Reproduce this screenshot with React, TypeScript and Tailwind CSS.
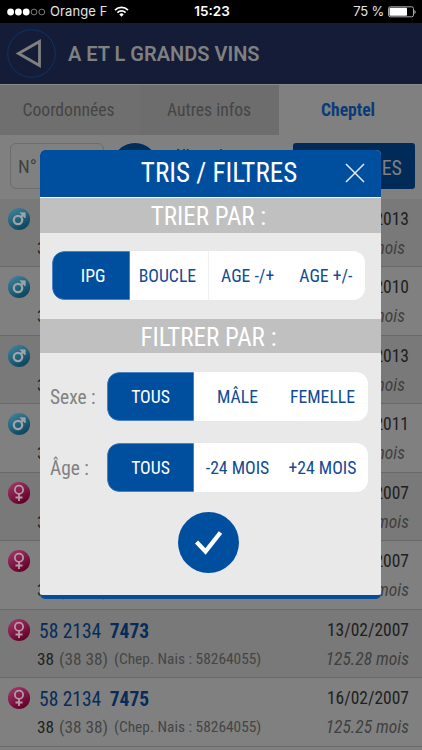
import { clsx } from 'clsx';

type Sex = 'male' | 'female';

interface Animal {
    sex: Sex;
    country: string;
    num: string;
    work: string;
    date: string;
    age: string;
}

const animals: Animal[] = [
    { sex: 'male', country: '58 2134', num: '7467', work: '38', date: '13/02/2013', age: '53.25 mois' },
    { sex: 'male', country: '58 2134', num: '7468', work: '38', date: '16/02/2010', age: '89.25 mois' },
    { sex: 'male', country: '58 2134', num: '7469', work: '38', date: '13/02/2013', age: '53.25 mois' },
    { sex: 'male', country: '58 2134', num: '7470', work: '38', date: '16/02/2011', age: '77.25 mois' },
    { sex: 'female', country: '58 2134', num: '7471', work: '38', date: '13/02/2007', age: '125.28 mois' },
    { sex: 'female', country: '58 2134', num: '7472', work: '38', date: '13/02/2007', age: '125.28 mois' },
    { sex: 'female', country: '58 2134', num: '7473', work: '38', date: '13/02/2007', age: '125.28 mois' },
    { sex: 'female', country: '58 2134', num: '7475', work: '38', date: '16/02/2007', age: '125.25 mois' },
];

function StatusBar() {
    return (
        <div className="relative flex h-[23px] items-center justify-between bg-black pl-[7px] pr-[6px] font-[Inter,sans-serif] text-[13px] text-[#e4e4e4]">
            <div className="flex items-center">
                <svg width="39" height="8" viewBox="0 0 39 8">
                    <circle cx="3.6" cy="4" r="3.4" fill="#fff" />
                    <circle cx="11.4" cy="4" r="3.4" fill="#fff" />
                    <circle cx="19.2" cy="4" r="3.4" fill="#fff" />
                    <circle cx="27" cy="4" r="2.9" fill="none" stroke="#999" strokeWidth="0.8" />
                    <circle cx="34.8" cy="4" r="2.9" fill="none" stroke="#999" strokeWidth="0.8" />
                </svg>
                <span className="ml-[4px] mt-px tracking-[0.1px]">Orange F</span>
                <svg className="ml-[6px]" width="15" height="11" viewBox="0 0 15 11" fill="none" stroke="#fff" strokeWidth="1.7">
                    <path d="M1 4.1a9.2 9.2 0 0 1 13 0" />
                    <path d="M3.4 6.6a5.8 5.8 0 0 1 8.2 0" />
                    <path d="M7.5 10.7 5.3 8.4a3.1 3.1 0 0 1 4.4 0z" fill="#fff" stroke="none" />
                </svg>
            </div>
            <span className="absolute left-[2px] right-0 text-center text-[13.5px] font-semibold text-white">15:23</span>
            <div className="flex items-center">
                <span className="mt-px tracking-[-0.2px]">75 %</span>
                <svg className="ml-[4px]" width="28" height="12" viewBox="0 0 28 12">
                    <rect x="0.5" y="0.8" width="25" height="10" rx="1.8" fill="none" stroke="#aaa" />
                    <rect x="1.5" y="1.8" width="17.5" height="8" rx="0.8" fill="#fff" />
                    <path d="M26.5 4v4c1.4-.4 1.4-3.6 0-4z" fill="#ccc" />
                </svg>
            </div>
        </div>
    );
}

function SexIcon({ sex }: { sex: Sex }) {
    const male = sex === 'male';
    return (
        <svg width="24" height="24" viewBox="0 0 24 24">
            <defs>
                <linearGradient id={sex} x1="0" y1="0" x2="0.6" y2="1">
                    <stop offset="0" stopColor={male ? '#4788a1' : '#a63d70'} />
                    <stop offset="1" stopColor={male ? '#0c465f' : '#640029'} />
                </linearGradient>
            </defs>
            <circle cx="12" cy="12" r="11.1" fill={`url(#${sex})`} />
            {male ? (
                <g fill="none" stroke="#9aa5aa" strokeWidth="2.3">
                    <circle cx="11" cy="13" r="4.2" />
                    <path d="m14 10 2.5-2.5" />
                    <path d="M13 5.8h5.2v5.2z" fill="#9aa5aa" strokeWidth="0.8" />
                </g>
            ) : (
                <g fill="none" stroke="#b79aa5" strokeWidth="1.8">
                    <circle cx="12" cy="8.8" r="4.1" />
                    <path d="M12 13v7M8.5 16.5h7" />
                </g>
            )}
        </svg>
    );
}

function Row({ animal, odd }: { animal: Animal; odd: boolean }) {
    return (
        <div className={clsx('flex h-[68.5px] shrink-0 border-b border-[#696969] pl-[7px] pr-[13px]', odd ? 'bg-[#808080]' : 'bg-[#797979]')}>
            <div className="w-[24px] shrink-0 pt-[8px]">
                <SexIcon sex={animal.sex} />
            </div>
            <div className="flex-1 whitespace-nowrap">
                <div className="mt-[10px] pl-[8px] text-[19.5px] leading-[24px] text-[#072c59]">
                    {animal.country} <b className="ml-[4px] font-bold">{animal.num}</b>
                </div>
                <div className="mt-[4px] flex items-center pl-[6px] text-[17.3px] leading-[22px] text-[#454545]">
                    <span className="text-[#222]">{animal.work}</span>
                    <span className="ml-[5px]">(38 38)</span>
                    <span className="ml-[6px] text-[15.4px]">(Chep. Nais : 58264055)</span>
                </div>
            </div>
            <div className="text-right text-[17.5px]">
                <div className="mt-[9px] leading-[22px] text-[#202020]">{animal.date}</div>
                <div className={clsx('mt-[7px] italic leading-[22px] text-[#404040]', animal.sex === 'male' && 'pr-[4px]')}>{animal.age}</div>
            </div>
        </div>
    );
}

function Segments({ items, className }: { items: string[]; className?: string }) {
    return (
        <div className={clsx('grid h-[49px] auto-cols-fr grid-flow-col overflow-hidden rounded-[12px] bg-white text-[17.7px] text-[#124c93]', className)}>
            {items.map((item, i) => (
                <button
                    key={item}
                    className={clsx(
                        'flex items-center justify-center whitespace-nowrap pt-[2px]',
                        i === 0 && 'rounded-l-[12px] border border-[#4d83bd] bg-[#004f9f] text-white',
                        i === 0 && items.length === 4 && 'pl-[4px]',
                        i === 1 && items.length === 4 && 'border-r border-[#f0f0f0] pr-[3px]',
                        i === 2 && items.length === 3 && 'pr-[4px]'
                    )}
                >
                    {item}
                </button>
            ))}
        </div>
    );
}

function FilterModal() {
    return (
        <div className="absolute left-[40px] top-[150px] h-[449px] w-[341px] overflow-hidden rounded-[5px] border-b-4 border-[#074c98] bg-[#e9e9e9]">
            <div className="relative flex h-[48px] items-center justify-center border-b border-white bg-[#004f9f] text-[27px] text-white">
                <span className="pl-[17px]">TRIS / FILTRES</span>
                <svg className="absolute right-[16px] top-[13px]" width="20" height="20" viewBox="0 0 20 20" stroke="#e5eef8" strokeWidth="1.5">
                    <path d="m1 1 18 18M19 1 1 19" />
                </svg>
            </div>
            <div className="flex h-[35px] items-center justify-center bg-[#c0c0c0] pr-[4px] pt-[3px] text-[25px] text-white">TRIER PAR :</div>
            <div className="px-[12px] pb-[19px] pt-[18px]">
                <Segments items={['IPG', 'BOUCLE', 'AGE -/+', 'AGE +/-']} className="w-[313px]" />
            </div>
            <div className="flex h-[34px] items-center justify-center bg-[#c0c0c0] pr-[4px] pt-[3px] text-[25px] text-white">FILTRER PAR :</div>
            <div className="flex items-center pl-[10px] pt-[19px] text-[19.4px] text-[#828282]">
                <span className="w-[57px] pt-[2px]">Sexe :</span>
                <Segments items={['TOUS', 'MÂLE', 'FEMELLE']} className="w-[261px]" />
            </div>
            <div className="flex items-center pl-[10px] pt-[22px] text-[19.4px] text-[#828282]">
                <span className="w-[57px] pt-[2px]">Âge :</span>
                <Segments items={['TOUS', '-24 MOIS', '+24 MOIS']} className="w-[261px]" />
            </div>
            <button className="ml-[138px] mt-[20px] flex h-[61px] w-[61px] items-center justify-center rounded-full bg-[#004f9f]">
                <svg width="28" height="26" viewBox="0 0 28 26" fill="none" stroke="#fff" strokeWidth="4.4">
                    <path d="M1.5 12 10.5 21.5 25.5 2.5" />
                </svg>
            </button>
        </div>
    );
}

export default function App() {
    return (
        <div className="relative flex h-[750px] w-[422px] flex-col overflow-hidden bg-[#808080] font-[Roboto,sans-serif] font-stretch-condensed">
            <StatusBar />
            <header className="flex h-[61px] shrink-0 items-center bg-[#141c38] pl-[7px]">
                <svg width="49" height="49" viewBox="0 0 49 49" fill="none">
                    <circle cx="24.5" cy="24.5" r="23.8" stroke="#0c3568" />
                    <path d="M11.5 24.5 32.5 12.5v24z" stroke="#808080" strokeWidth="2.8" />
                </svg>
                <h1 className="ml-[12px] text-[20px] font-semibold text-[#808080] font-stretch-[94%]">A ET L GRANDS VINS</h1>
            </header>
            <nav className="flex h-[51px] shrink-0 border-t border-[#8a8a8a] text-[17.6px] text-[#454545]">
                <div className="flex w-[140px] items-center justify-center bg-[#6f6f6f] pr-[3px]">Coordonnées</div>
                <div className="flex w-[139px] items-center justify-center bg-[#6d6d6d] pr-px">Autres infos</div>
                <div className="flex flex-1 items-center justify-center bg-[#808080] pr-[5px] font-bold text-[#0a3b77]">Cheptel</div>
            </nav>
            <div className="flex h-[63.5px] shrink-0 items-start px-[10px] pr-[7px] pt-[8px]">
                <div className="flex h-[46px] w-[94px] items-center rounded-[6px] border border-[#6c6c6c] pl-[7px] pt-[2px] text-[19px] text-[#404040]">N°</div>
                <div className="ml-[8px] h-[46px] w-[46px] rounded-full bg-[#002d5c]"></div>
                <div className="ml-[18px] mt-[1px] w-[117px] text-[16px] text-[#202020]">Nb vaches</div>
                <button className="flex h-[46px] w-[122px] items-center justify-end rounded-[3px] bg-[#002a57] pr-[13px] pt-[3px] text-[20px] text-[#808080]">TRIS/FILTRES</button>
            </div>
            {animals.map((a, i) => (
                <Row key={a.num} animal={a} odd={i % 2 === 1} />
            ))}
            <FilterModal />
        </div>
    );
}
